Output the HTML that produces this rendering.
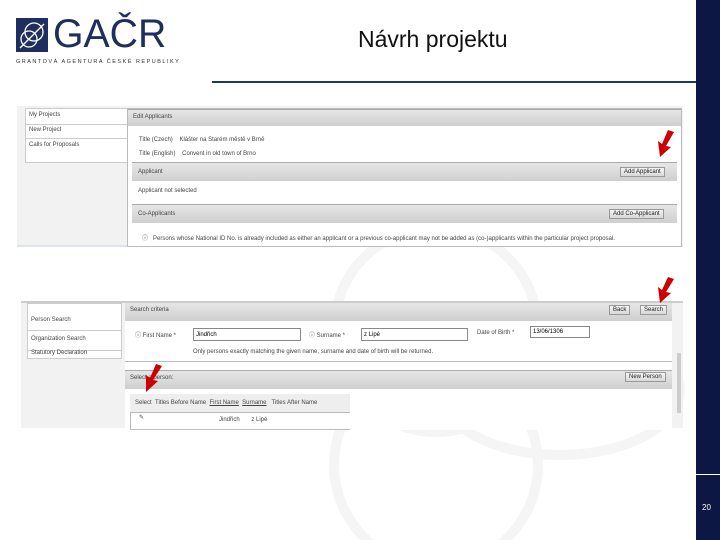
<!DOCTYPE html>
<html><head><meta charset="utf-8"><style>
*{margin:0;padding:0;box-sizing:border-box}
body{width:720px;height:540px;overflow:hidden;background:#fff;font-family:"Liberation Sans",sans-serif;position:relative}
.abs{position:absolute}
.bar{left:696px;top:0;width:24px;height:540px;background:#0c1843}
.sc{font-size:6px;color:#444}
.btn{position:absolute;border:1px solid #999;background:linear-gradient(#f4f4f4,#d8d8d8);font-size:6px;padding:1px 3px;color:#222}
.hd{position:absolute;background:linear-gradient(#e6e6e6,#cfcfcf);border-top:1px solid #aaa}
</style></head><body>
<svg class="abs" style="left:0;top:0" width="720" height="540">
<g fill="none" stroke="#f5f5f5" stroke-width="10">
<circle cx="436" cy="330" r="102"/>
<circle cx="436" cy="465" r="102"/>
<ellipse cx="560" cy="390" rx="120" ry="65"/>
</g>
</svg>
<div class="abs bar"></div>
<div class="abs" style="left:696px;top:474px;width:24px;height:1px;background:#fff"></div>
<div class="abs" style="left:702px;top:503px;font-size:8px;color:#fff">20</div>
<div class="abs" style="left:212px;top:81px;width:484px;height:2px;background:#1d3a5c"></div>
<div class="abs" style="left:358px;top:26px;font-size:23px;color:#111">Návrh projektu</div>
<!-- logo -->
<svg class="abs" style="left:16px;top:18px" width="32" height="34"><rect width="32" height="34" fill="#1e2e5e"/><g fill="none" stroke="#fff" stroke-width="1.3"><circle cx="18" cy="14" r="9"/><circle cx="13" cy="21" r="8"/><path d="M4 30 L28 6"/></g></svg>
<div class="abs" style="left:53px;top:12px;font-size:40px;color:#1e2e5e;line-height:44px;transform:scaleX(0.98);transform-origin:left">GAČR</div>
<div class="abs" style="left:16px;top:59px;font-size:5.5px;color:#333;letter-spacing:1.5px">GRANTOVÁ AGENTURA ČESKÉ REPUBLIKY</div>
<!-- screenshot 1 -->
<div class="abs" style="left:17px;top:106px;width:666px;height:141px;background:#f2f2f2;border-bottom:2px solid #dde4ee">
 <div class="abs" style="left:8px;top:2px;width:105px;height:55px;background:#fff;border:1px solid #ccc"></div>
 <div class="abs sc" style="left:12px;top:6px">My Projects</div>
 <div class="abs" style="left:8px;top:18px;width:105px;height:1px;background:#ccc"></div>
 <div class="abs sc" style="left:12px;top:21px">New Project</div>
 <div class="abs" style="left:8px;top:32px;width:105px;height:1px;background:#ccc"></div>
 <div class="abs sc" style="left:12px;top:36px">Calls for Proposals</div>
 <div class="abs" style="left:110px;top:2px;width:555px;height:139px;background:#fff;border:1px solid #bbb"></div>
 <div class="hd" style="left:111px;top:3px;width:553px;height:17px"></div>
 <div class="abs sc" style="left:116px;top:8px">Edit Applicants</div>
 <div class="abs sc" style="left:122px;top:31px">Title (Czech) &nbsp;&nbsp; Klášter na Starém městě v Brně</div>
 <div class="abs sc" style="left:122px;top:45px">Title (English) &nbsp;&nbsp; Convent in old town of Brno</div>
 <div class="hd" style="left:115px;top:56px;width:545px;height:19px"></div>
 <div class="abs sc" style="left:121px;top:63px">Applicant</div>
 <div class="btn" style="left:603px;top:61px">Add Applicant</div>
 <div class="abs sc" style="left:121px;top:82px">Applicant not selected</div>
 <div class="hd" style="left:115px;top:98px;width:545px;height:19px"></div>
 <div class="abs sc" style="left:121px;top:105px">Co-Applicants</div>
 <div class="btn" style="left:592px;top:103px">Add Co-Applicant</div>
 <div class="abs sc" style="left:125px;top:127px">ⓘ &nbsp; Persons whose National ID No. is already included as either an applicant or a previous co-applicant may not be added as (co-)applicants within the particular project proposal.</div>
</div>
<!-- screenshot 2 -->
<div class="abs" style="left:21px;top:301px;width:662px;height:127px;background:#f2f2f2;border-top:2px solid #ccc">
 <div class="abs" style="left:6px;top:0;width:95px;height:56px;background:#fff;border:1px solid #ccc"></div>
 <div class="abs sc" style="left:10px;top:14px">Person Search</div>
 <div class="abs" style="left:6px;top:27px;width:95px;height:1px;background:#ccc"></div>
 <div class="abs sc" style="left:10px;top:33px">Organization Search</div>
 <div class="abs" style="left:6px;top:47px;width:95px;height:1px;background:#ccc"></div>
 <div class="abs sc" style="left:10px;top:47px">Statutory Declaration</div>
 <div class="abs" style="left:104px;top:0;width:547px;height:127px;background:#fff"></div>
 <div class="hd" style="left:104px;top:0;width:547px;height:18px;border-top:none"></div>
 <div class="abs sc" style="left:109px;top:4px">Search criteria</div>
 <div class="btn" style="left:588px;top:2px">Back</div>
 <div class="btn" style="left:619px;top:2px">Search</div>
 <div class="abs sc" style="left:114px;top:27px">ⓘ First Name *</div>
 <div class="abs" style="left:172px;top:25px;width:108px;height:13px;border:1px solid #888;font-size:6px;padding:3px 2px">Jindřich</div>
 <div class="abs sc" style="left:288px;top:27px">ⓘ Surname *</div>
 <div class="abs" style="left:340px;top:25px;width:107px;height:13px;border:1px solid #888;font-size:6px;padding:3px 2px">z Lipé</div>
 <div class="abs sc" style="left:456px;top:27px">Date of Birth *</div>
 <div class="abs" style="left:509px;top:23px;width:60px;height:12px;border:1px solid #888;font-size:6px;padding:2px">13/06/1306</div>
 <div class="abs sc" style="left:172px;top:46px">Only persons exactly matching the given name, surname and date of birth will be returned.</div>
 <div class="abs" style="left:104px;top:58px;width:547px;height:1px;background:#bbb"></div>
 <div class="hd" style="left:104px;top:67px;width:547px;height:19px"></div>
 <div class="abs sc" style="left:109px;top:72px">Select a person:</div>
 <div class="btn" style="left:604px;top:69px">New Person</div>
 <div class="abs" style="left:109px;top:91px;width:220px;height:36px;border:1px solid #bbb;border-right:none"></div>
 <div class="abs" style="left:109px;top:91px;width:220px;height:19px;background:#eee;border-bottom:1px solid #bbb"></div>
 <div class="abs sc" style="left:114px;top:97px">Select &nbsp;Titles Before Name &nbsp;<u>First Name</u> &nbsp;<u>Surname</u> &nbsp;&nbsp;Titles After Name</div>
 <div class="abs sc" style="left:198px;top:114px">Jindřich &nbsp;&nbsp;&nbsp;&nbsp;&nbsp; z Lipé</div>
 <div class="abs sc" style="left:118px;top:111px">✎</div>
 <div class="abs" style="left:656px;top:50px;width:4px;height:60px;background:#ccc"></div>
</div>
<!-- red arrows -->
<svg class="abs" style="left:0;top:0" width="720" height="540" fill="#c00">
<g><path d="M674 132 L668 130 L662 144 L658 141 L660 157 L671 147 L666 146 Z"/></g>
<g><path d="M674 279 L668 277 L662 290 L658 287 L660 303 L671 293 L666 292 Z"/></g>
<g><path d="M162 366 L156 364 L150 378 L146 375 L146 392 L158 381 L153 380 Z"/></g>
</svg>
</body></html>
